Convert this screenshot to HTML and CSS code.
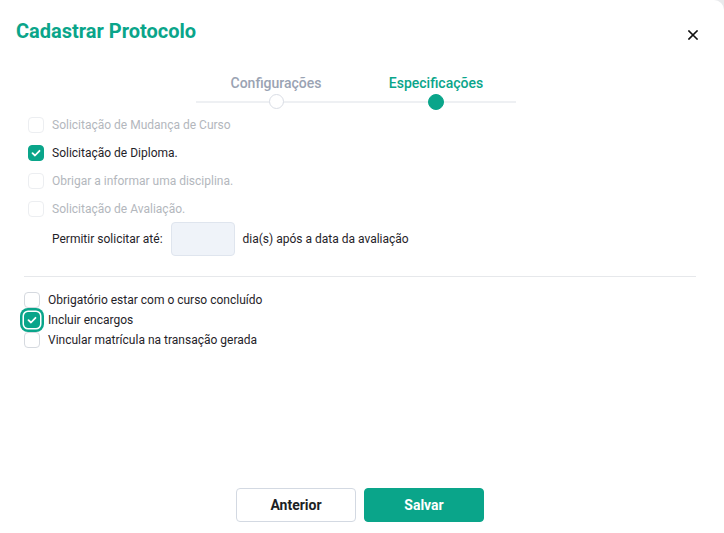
FILE: index.html
```html
<!DOCTYPE html>
<html lang="pt">
<head>
<meta charset="utf-8">
<link rel="stylesheet" href="styles.css">
</head>
<body>
<div class="modal">
  <header class="head">
    <h1 class="title">Cadastrar Protocolo</h1>
    <button class="close" aria-label="Fechar">
      <svg width="10" height="10" viewBox="0 0 10 10"><path d="M1 1L9 9M9 1L1 9" stroke="#111" stroke-width="1.6" stroke-linecap="square"/></svg>
    </button>
  </header>

  <div class="stepper">
    <div class="step">
      <span class="step-label">Configurações</span>
      <span class="dot"></span>
    </div>
    <div class="step active">
      <span class="step-label">Especificações</span>
      <span class="dot"></span>
    </div>
  </div>

  <div class="group1">
    <label class="row disabled"><span class="cb"></span>Solicitação de Mudança de Curso</label>
    <label class="row"><span class="cb checked"><svg viewBox="0 0 16 16" width="16" height="16"><path d="M4.5 8.2L7 10.5L11.5 5.8" fill="none" stroke="#fff" stroke-width="1.8" stroke-linecap="round" stroke-linejoin="round"/></svg></span>Solicitação de Diploma.</label>
    <label class="row disabled"><span class="cb"></span>Obrigar a informar uma disciplina.</label>
    <label class="row disabled"><span class="cb"></span>Solicitação de Avaliação.</label>
    <div class="permit">
      <span>Permitir solicitar até:</span>
      <span class="input"></span>
      <span>dia(s) após a data da avaliação</span>
    </div>
  </div>

  <hr class="divider">

  <div class="group2">
    <label class="row2"><span class="cb"></span>Obrigatório estar com o curso concluído</label>
    <label class="row2"><span class="cb checked focus"><svg viewBox="0 0 16 16" width="16" height="16"><path d="M4.5 8.2L7 10.5L11.5 5.8" fill="none" stroke="#fff" stroke-width="1.8" stroke-linecap="round" stroke-linejoin="round"/></svg></span>Incluir encargos</label>
    <label class="row2"><span class="cb"></span>Vincular matrícula na transação gerada</label>
  </div>

  <footer class="actions">
    <button class="btn btn-outline">Anterior</button>
    <button class="btn btn-primary">Salvar</button>
  </footer>
</div>
</body>
</html>
```

FILE: styles.css
```css
* { box-sizing: border-box; }
html, body { margin: 0; padding: 0; }
body {
  background: #e9eaec;
  font-family: Roboto, "Liberation Sans", sans-serif;
  width: 724px;
  height: 533px;
  overflow: hidden;
}
.modal {
  width: 724px;
  height: 533px;
  background: #fff;
  border-radius: 0 10px 0 0;
  display: flex;
  flex-direction: column;
}
.head {
  display: flex;
  justify-content: space-between;
  align-items: center;
  padding: 19px 26px 0 16px;
  height: 42px;
}
.title {
  margin: 0;
  font-size: 20px;
  font-weight: 700;
  color: #0aa58a;
  letter-spacing: 0;
}
.close {
  border: 0;
  background: none;
  padding: 0;
  width: 10px;
  height: 10px;
  margin-top: 8px;
  display: flex;
}
.stepper {
  display: flex;
  padding-left: 196px;
  margin-top: 33px;
}
.step {
  width: 160px;
  display: flex;
  flex-direction: column;
  align-items: center;
  position: relative;
}
.step::before {
  content: "";
  position: absolute;
  left: 0;
  right: 0;
  bottom: 7px;
  height: 2px;
  background: #eef0f3;
}
.step-label {
  font-size: 14px;
  font-weight: 500;
  color: #9aa3b3;
  line-height: 16px;
}
.dot {
  width: 15px;
  height: 15px;
  border-radius: 50%;
  border: 1px solid #d9dde5;
  background: #fff;
  margin-top: 3px;
  position: relative;
}
.step.active .step-label { color: #0aa58a; }
.step.active .dot { background: #0aa58a; border-color: #0aa58a; width: 16px; height: 16px; }

.group1 {
  display: flex;
  flex-direction: column;
  padding-left: 28px;
  margin-top: 1px;
}
.row {
  display: flex;
  align-items: center;
  gap: 8px;
  height: 28px;
  font-size: 12px;
  color: #1f2329;
}
.row.disabled { color: #b3b7bd; }
.cb {
  width: 16px;
  height: 16px;
  border: 1px solid #d5d9df;
  border-radius: 4px;
  background: #fff;
  flex: none;
  display: flex;
  position: relative;
}
.row.disabled .cb { border-color: #eceef1; }
.cb.checked { background: #0aa58a; border-color: #0aa58a; }
.cb svg { position: absolute; left: -1px; top: -1px; }
.cb.focus { box-shadow: 0 0 0 1.5px #fff, 0 0 0 4px #0aa58a; }
.permit {
  display: flex;
  align-items: center;
  gap: 8px;
  padding-left: 24px;
  margin-top: -1px;
  font-size: 12px;
  color: #1f2329;
}
.input {
  width: 64px;
  height: 34px;
  background: #eff3f9;
  border: 1px solid #dfe5ee;
  border-radius: 4px;
}
.divider {
  border: 0;
  border-top: 1px solid #e6e8eb;
  margin: 20px 28px 0 24px;
}
.group2 {
  display: flex;
  flex-direction: column;
  padding-left: 24px;
  margin-top: 13px;
}
.row2 {
  display: flex;
  align-items: center;
  gap: 8px;
  height: 20px;
  font-size: 12px;
  color: #1f2329;
}
.actions {
  margin-top: auto;
  display: flex;
  justify-content: center;
  gap: 8px;
  padding: 0 4px 11px 0;
}
.btn {
  width: 120px;
  height: 34px;
  border-radius: 4px;
  font-family: Roboto, "Liberation Sans", sans-serif;
  font-size: 14px;
  font-weight: 700;
  cursor: pointer;
}
.btn-outline {
  background: #fff;
  border: 1px solid #d3d9e2;
  color: #1c1f24;
}
.btn-primary {
  background: #0aa58a;
  border: 1px solid #0aa58a;
  color: #fff;
}
```
